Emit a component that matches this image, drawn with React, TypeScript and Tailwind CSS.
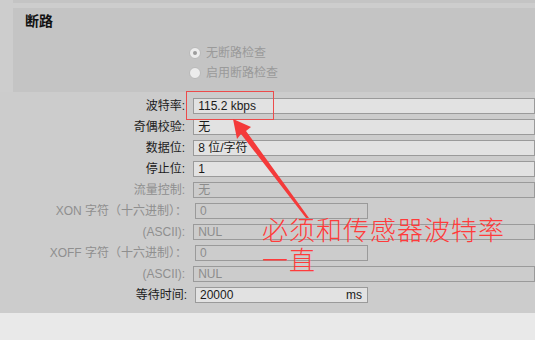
import React from 'react';

const font = { fontFamily: '"Liberation Sans", "Noto Sans CJK SC", sans-serif' };

type Row = {
  label: string;
  value: string;
  disabled?: boolean;
  short?: boolean;
  unit?: string;
};

const rows: Row[] = [
  { label: '波特率:', value: '115.2 kbps' },
  { label: '奇偶校验:', value: '无' },
  { label: '数据位:', value: '8 位/字符' },
  { label: '停止位:', value: '1' },
  { label: '流量控制:', value: '无', disabled: true },
  { label: 'XON 字符（十六进制）：', value: '0', disabled: true, short: true },
  { label: '(ASCII):', value: 'NUL', disabled: true },
  { label: 'XOFF 字符（十六进制）：', value: '0', disabled: true, short: true },
  { label: '(ASCII):', value: 'NUL', disabled: true },
  { label: '等待时间:', value: '20000', short: true, unit: 'ms' },
];

const Radio = ({ checked, label }: { checked?: boolean; label: string }) => (
  <div className="flex items-center h-[20px]">
    <span className="w-[12px] h-[12px] rounded-full border border-[#b9b9b9] bg-[#ececec] flex items-center justify-center">
      {checked && <span className="w-[4px] h-[4px] rounded-full bg-[#9c9c9c]" />}
    </span>
    <span className="ml-[5px] text-[12px] text-[#9a9a9a]">{label}</span>
  </div>
);

export default function App() {
  return (
    <div className="relative w-[535px] h-[340px] overflow-hidden bg-[#cdcdcd] flex flex-col" style={font}>
      <div className="ml-[13px] h-[3px] bg-[#c4c4c4]" />

      {/* 断路 panel */}
      <div className="mt-[5px] ml-[13px] h-[84px] bg-[#c4c4c4] pl-[12px] pt-[3px]">
        <div className="text-[14px] leading-[20px] font-bold text-[#111]">断路</div>
        <div className="mt-[12px] pl-[164px]">
          <Radio checked label="无断路检查" />
          <Radio label="启用断路检查" />
        </div>
      </div>

      {/* form */}
      <div className="pt-[6px] pb-[10px] flex flex-col gap-[5px] bg-[#cccccc]">
        {rows.map((r, i) => (
          <div key={i} className="flex items-center h-[16px]">
            <div
              className={`w-[190px] pr-[3px] text-right text-[12px] leading-[16px] whitespace-nowrap ${r.disabled ? 'text-[#8f8f8f]' : 'text-[#1c1c1c]'}`}
            >
              {r.label}
            </div>
            <div
              className={`ml-[5px] h-[16px] border border-[#9a9a9a] flex items-center justify-between pl-[4px] pr-[5px] text-[12px] ${r.short ? 'w-[173px]' : 'w-[345px]'} ${r.disabled ? 'bg-[#cccccc] text-[#8c8c8c]' : 'bg-[#e2e2e2] text-[#1a1a1a]'}`}
            >
              <span>{r.value}</span>
              {r.unit && <span>{r.unit}</span>}
            </div>
          </div>
        ))}
      </div>

      <div className="flex-1 bg-[#e9e9e9]" />

      {/* annotation */}
      <div className="absolute left-[186px] top-[91px] w-[88px] h-[29px] border border-[#ec4b4b]" />
      <svg className="absolute left-0 top-0" width="535" height="340">
        <polygon points="233,119 251,127 246,131 309,218 306,218 241,134 237,139" fill="#f43a3a" />
      </svg>
      <div
        className="absolute left-[262px] top-[214px] text-[26px] leading-[30px] tracking-[1px] text-[#ff3b3b] font-light"
        style={{ fontFamily: '"Noto Sans CJK SC", sans-serif' }}
      >
        必须和传感器波特率
        <br />
        一直
      </div>
    </div>
  );
}
